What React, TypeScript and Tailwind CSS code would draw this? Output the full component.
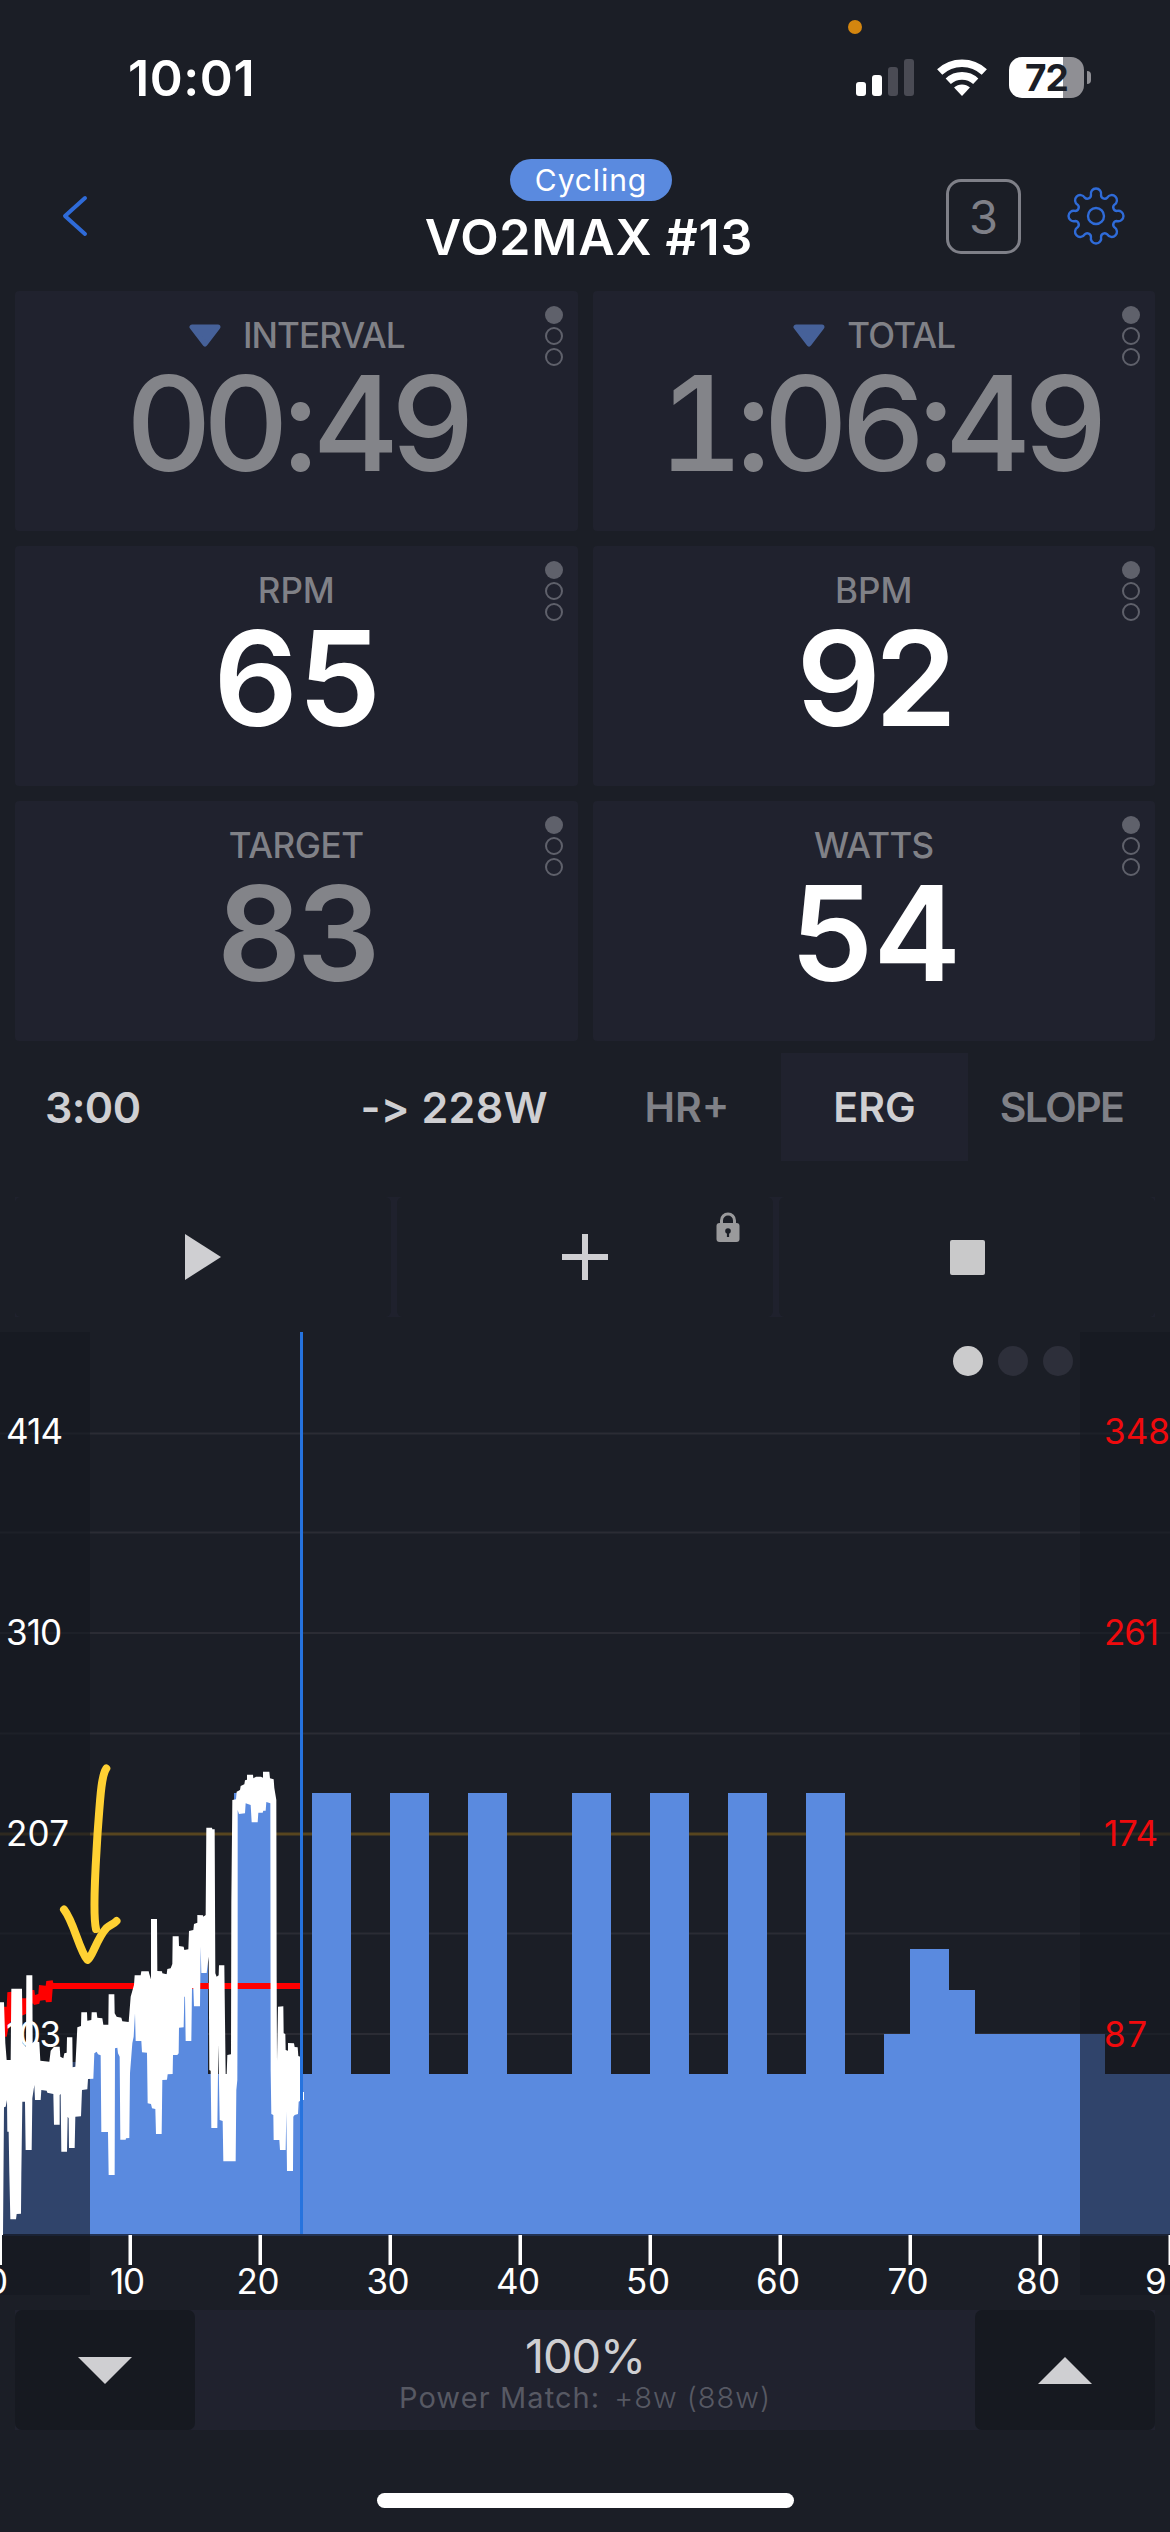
import type { ReactNode } from "react";
import clsx from "clsx";

interface MetricCardProps {
  label: string;
  value: string;
  labelClass?: string;
  valueClass: string;
  hasMarker?: boolean;
}

interface Segment {
  from: number;
  to: number;
  top: number;
}

const PX_PER_MIN = 13;
const CHART_BASE = 903;

// planned intervals, minutes -> top edge
const segments: Segment[] = [
  { from: 16, to: 18, top: 742 },
  { from: 18, to: 21, top: 461 },
  { from: 21, to: 24, top: 742 },
  { from: 24, to: 27, top: 461 },
  { from: 27, to: 30, top: 742 },
  { from: 30, to: 33, top: 461 },
  { from: 33, to: 36, top: 742 },
  { from: 36, to: 39, top: 461 },
  { from: 39, to: 44, top: 742 },
  { from: 44, to: 47, top: 461 },
  { from: 47, to: 50, top: 742 },
  { from: 50, to: 53, top: 461 },
  { from: 53, to: 56, top: 742 },
  { from: 56, to: 59, top: 461 },
  { from: 59, to: 62, top: 742 },
  { from: 62, to: 65, top: 461 },
  { from: 65, to: 68, top: 742 },
  { from: 68, to: 70, top: 702 },
  { from: 70, to: 73, top: 617 },
  { from: 73, to: 75, top: 658 },
  { from: 75, to: 85, top: 702 },
  { from: 85, to: 90, top: 742 },
];

const gridLines = [101.5, 200.5, 301, 401.5, 601.5, 702];

const powerLabels = [
  { text: "414", y: 112, width: 57 },
  { text: "310", y: 313, width: 56 },
  { text: "207", y: 514, width: 63 },
  { text: "103", y: 714.5, width: 55 },
];

const heartLabels = [
  { text: "348", y: 112, width: 66 },
  { text: "261", y: 313, width: 55 },
  { text: "174", y: 514, width: 54 },
  { text: "87", y: 714.5, width: 43 },
];

const minuteLabels = [
  { text: "0", x: -3, width: 22 },
  { text: "10", x: 127.5, width: 35 },
  { text: "20", x: 258, width: 43 },
  { text: "30", x: 388, width: 43 },
  { text: "40", x: 518, width: 44 },
  { text: "50", x: 648, width: 44 },
  { text: "60", x: 778, width: 44 },
  { text: "70", x: 908, width: 41 },
  { text: "80", x: 1038, width: 44 },
  { text: "90", x: 1169, width: 48 },
];

// recorded power, drawn as the filled envelope of the samples
const powerTrace =
  "0,637 12,637 16,760 20,810 32,810 34,596 66,596 68,760 78,770 79,556 97,556 98,760 106,752 118,757 121,812 148,815 152,782 162,770 179,770 181,800 190,805 193,790 200,788 201,742 217,742 218,832 226,830 232,712 243,708 244,667 261,667 262,692 274,690 275,667 290,667 292,683 307,685 310,704 325,704 326,613 343,613 344,670 350,680 364,683 367,694 386,696 392,620 402,585 404,556 422,556 424,544 446,544 448,552 453,568 453,387 471,387 472,543 486,544 487,550 500,553 502,537 512,535 517,522 518,439 536,439 537,468 551,470 553,480 565,478 567,423 580,420 582,402 592,398 592,375 609,376 610,380 617,375 619,113 636,113 637,118 644,118 646,550 650,560 656,556 657,526 673,526 675,690 677,852 680,852 682,795 693,793 694,335 697,30 708,28 710,5 720,0 722,-12 733,-17 735,-29 741,-31 741,-46 759,-46 760,-35 768,-40 783,-40 789,-37 789,-55 808,-55 810,-35 821,-32 823,-6 829,30 830,560 831,815 834,650 850,649 851,730 856,732 857,780 864,782 864,759 882,760 884,771 893,772 895,798 901,800 901,932 " +
  "896,935 894,972 884,975 880,980 879,1143 861,1143 859,965 857,1080 840,1080 838,1050 821,1050 820,975 814,972 812,840 811,40 799,36 797,62 790,62 788,68 775,68 773,97 755,97 752,45 737,40 735,70 717,72 713,60 713,600 712,870 709,900 707,1114 670,1114 668,993 659,990 655,765 652,1014 634,1014 632,842 628,840 626,500 620,549 604,549 602,470 600,649 582,649 580,595 576,595 574,753 557,753 555,620 553,620 551,712 537,713 536,790 532,795 519,795 518,852 503,853 501,869 487,870 485,1032 468,1032 466,957 456,955 453,942 443,940 441,788 426,787 424,753 407,753 405,670 401,740 397,760 390,850 388,1044 378,1045 377,1049 361,1049 359,800 354,790 352,773 345,775 344,1155 326,1155 324,1026 304,1026 302,796 294,793 290,785 283,790 280,866 264,867 262,898 246,900 243,979 226,980 224,1074 207,1074 206,985 203,980 201,1085 184,1085 182,912 179,915 179,1004 162,1004 160,912 142,908 140,902 124,900 122,930 105,930 103,885 97,925 95,1080 77,1080 75,935 67,935 64,1150 63,1271 50,1272 48,1288 31,1288 28,1150 26,1025 22,1025 21,930 17,950 12,952 9,1335 0,1335";

const heartTrace =
  "12,650 20,650 22,607 34,605 66,625 78,625 97,600 103,600 105,615 115,612 117,585 137,587 139,573 158,571 160,579 900,579 900,597 158,597 155,636 138,637 136,630 120,632 118,641 102,645 99,640 80,650 78,672 34,690 26,712 20,740 12,740";

function gearPath() {
  const at = (deg: number) => {
    const rad = ((deg - 90) * Math.PI) / 180;
    return `${(30 + 21.6 * Math.cos(rad)).toFixed(2)} ${(30 + 21.6 * Math.sin(rad)).toFixed(2)}`;
  };
  let d = `M${at(-13.5)}`;
  for (let i = 0; i < 8; i++) {
    d += `A5.2 5.2 0 1 1 ${at(i * 45 + 13.5)}A3.6 3.6 0 0 0 ${at(i * 45 + 31.5)}`;
  }
  return d + "Z";
}

function StatusBar() {
  return (
    <div className="relative flex h-[128px] items-start justify-between pl-[128px] pr-[79px] pt-[57px] text-white">
      <span className="-mt-[4px] text-[50px] font-semibold leading-none tracking-[0.6px]">
        10:01
      </span>
      <div className="absolute left-[848px] top-[20px] size-[14px] rounded-full bg-[#d4860f]" />
      <div className="flex">
        <div className="mt-[2px] flex h-[37px] items-end gap-[6px]">
          <div className="h-[14px] w-[10px] rounded-[3px] bg-white" />
          <div className="h-[21px] w-[10px] rounded-[3px] bg-white" />
          <div className="h-[29px] w-[10px] rounded-[3px] bg-[#4a4b54]" />
          <div className="h-[37px] w-[10px] rounded-[3px] bg-[#4a4b54]" />
        </div>
        <svg className="ml-[23px] mt-[2px] h-[37px] w-[50px]" viewBox="0 0 150 112">
          <g fill="none" stroke="#fff" strokeWidth="23">
            <path d="M7.5 39.6A99 99 0 0 1 142.5 39.6" />
            <path d="M33.4 67.4A61 61 0 0 1 116.6 67.4" />
          </g>
          <path d="M75 112L51 86.4A35 35 0 0 1 99 86.4Z" fill="#fff" />
        </svg>
        <div className="ml-[22px] flex h-[41px] w-[75px] items-center justify-center rounded-[13px] bg-[linear-gradient(90deg,#fff_54px,#8f8f94_54px)]">
          <span className="text-[37px] font-bold leading-none tracking-[-1px] text-[#1b1e26]">
            72
          </span>
        </div>
        <div className="ml-[3px] mt-[14px] h-[13px] w-[4px] rounded-r-full bg-[#8f8f94]" />
      </div>
    </div>
  );
}

function Header() {
  return (
    <div className="grid h-[163px] grid-cols-[371px_1fr_363px]">
      <svg className="ml-[60px] mt-[66px] h-[44px] w-[30px]" viewBox="0 0 30 44" fill="none">
        <path
          d="M25 4L5 22L25 40"
          stroke="#2f6bd8"
          strokeWidth="4"
          strokeLinecap="round"
          strokeLinejoin="round"
        />
      </svg>
      <div className="flex flex-col items-center pt-[31px] text-white">
        <div className="ml-[4px] flex h-[42px] w-[162px] items-center justify-center rounded-full bg-[#5a8adf]">
          <span className="text-[30px] leading-none tracking-[0.9px]">Cycling</span>
        </div>
        <h1 className="mt-[11px] whitespace-nowrap text-[50px] font-semibold leading-none tracking-[0.8px]">
          VO2MAX #13
        </h1>
      </div>
      <div className="flex items-start justify-end gap-[45px] pr-[44px]">
        <div className="mt-[51px] flex size-[75px] items-center justify-center rounded-[15px] border-[3px] border-[#7f8088] text-[47px] leading-none text-[#7f8088]">
          3
        </div>
        <svg
          className="mt-[58px] size-[60px]"
          viewBox="0 0 60 60"
          fill="none"
          stroke="#2f6bd8"
          strokeWidth="2.4"
        >
          <path d={gearPath()} />
          <circle cx="30" cy="30" r="8" />
        </svg>
      </div>
    </div>
  );
}

function MetricCard({ label, value, labelClass, valueClass, hasMarker }: MetricCardProps) {
  return (
    <div className="relative flex h-[240px] flex-col items-center rounded-[4px] bg-[#20222e] pt-[27px]">
      <div className="flex items-start gap-[21px] text-[35px] font-medium leading-none text-[#808187]">
        {hasMarker && (
          <svg className="mt-[6px] h-[23px] w-[34px]" viewBox="0 0 34 23">
            <path
              d="M4 3H30L17 20Z"
              fill="#466199"
              stroke="#466199"
              strokeWidth="5"
              strokeLinejoin="round"
            />
          </svg>
        )}
        <span className={labelClass}>{label}</span>
      </div>
      <span className={clsx("mt-[4px] text-[132px] leading-none", valueClass)}>{value}</span>
      <div className="absolute right-[15px] top-[15px] flex flex-col gap-[3px]">
        <i className="size-[18px] rounded-full bg-[#5f616b]" />
        <i className="size-[18px] rounded-full border-[2.5px] border-[#5f616b]" />
        <i className="size-[18px] rounded-full border-[2.5px] border-[#5f616b]" />
      </div>
    </div>
  );
}

function ModeRow() {
  return (
    <div className="mt-[12px] grid h-[108px] grid-cols-[593px_188px_187px_187px] items-center text-[41px] font-semibold leading-none">
      <div className="flex justify-between pl-[45px] pr-[45px] text-[43px] text-[#cfcfd2]">
        <span className="tracking-[-0.6px]">3:00</span>
        <span className="tracking-[0.4px]">-&gt; 228W</span>
      </div>
      <span className="text-center text-[#808187]">HR+</span>
      <span className="flex h-full items-center justify-center bg-[#20222e] text-[#cfcfd2]">
        ERG
      </span>
      <span className="text-center tracking-[-1.6px] text-[#808187]">SLOPE</span>
    </div>
  );
}

function ControlButton({ children }: { children: ReactNode }) {
  return (
    <button className="relative flex flex-1 items-center justify-center rounded-[6px] bg-[#1b1e26]">
      {children}
    </button>
  );
}

function Controls() {
  return (
    <div className="mx-[15px] mt-[36px] flex h-[120px] gap-[6px] bg-[#1f212d]">
      <ControlButton>
        <svg className="h-[46px] w-[36px]" viewBox="0 0 36 46">
          <path d="M0 0L36 23L0 46Z" fill="#cfcfd2" />
        </svg>
      </ControlButton>
      <ControlButton>
        <svg className="size-[46px]" viewBox="0 0 46 46">
          <path d="M23 0V46M0 23H46" stroke="#cfcfd2" strokeWidth="6" />
        </svg>
        <svg className="absolute left-[319px] top-[15px] h-[31px] w-[24px]" viewBox="0 0 24 31">
          <path d="M5.5 13V8.5a6.5 6.5 0 0 1 13 0V13" fill="none" stroke="#9a9a9c" strokeWidth="3" />
          <rect x="0.5" y="11" width="23" height="19" rx="3" fill="#9a9a9c" />
          <circle cx="12" cy="19" r="2.8" fill="#1b1e26" />
          <path d="M10.9 19h2.2v6h-2.2z" fill="#1b1e26" />
        </svg>
      </ControlButton>
      <ControlButton>
        <div className="size-[35px] rounded-[2px] bg-[#c9c9ca]" />
      </ControlButton>
    </div>
  );
}

function WorkoutChart() {
  return (
    <div className="relative mt-[15px] h-[963px]">
      <svg
        className="block h-[963px] w-full"
        viewBox="0 0 1170 963"
        fontFamily="Inter, sans-serif"
        fontSize="35"
      >
        {gridLines.map((y) => (
          <rect key={y} x="0" y={y - 1} width="1170" height="2" fill="#2b2c34" />
        ))}
        <rect x="0" y="500.5" width="1170" height="3" fill="#57451f" />

        <g fill="#5a8adf">
          {/* warm-up ramp */}
          <path
            d={`M0 730H80L128 694L135 672L151 652L185 630L198 606H208V${CHART_BASE}H0Z`}
          />
          {segments.map((s) => (
            <rect
              key={s.from}
              x={s.from * PX_PER_MIN}
              y={s.top}
              width={(s.to - s.from) * PX_PER_MIN}
              height={CHART_BASE - s.top}
              shapeRendering="crispEdges"
            />
          ))}
        </g>
        <rect x="0" y="902" width="1170" height="2" fill="#223252" />

        {/* parts outside of the selected range */}
        <rect x="0" y="0" width="90" height="963" fill="#161820" fillOpacity="0.61" />
        <rect x="1080" y="0" width="90" height="963" fill="#161820" fillOpacity="0.61" />

        <g transform="translate(0 458) scale(0.33333)">
          <polygon points={heartTrace} fill="#ff0000" />
          <polygon points={powerTrace} fill="#fff" />
        </g>
        <rect x="303" y="760" width="1" height="8" fill="#fff" />
        <rect x="300" y="0" width="3" height="902" fill="#2673de" />

        {minuteLabels.map((m, i) => (
          <g key={m.text} fill="#fff">
            <rect x={i * 130 - 1.5} y="903" width="3.5" height="30" />
            <text x={m.x} y="962" textAnchor="middle" textLength={m.width}>
              {m.text}
            </text>
          </g>
        ))}
        {powerLabels.map((l) => (
          <text key={l.text} x="6" y={l.y} fill="#fff" textLength={l.width}>
            {l.text}
          </text>
        ))}
        {heartLabels.map((l) => (
          <text key={l.text} x="1104" y={l.y} fill="#f00a0d" textLength={l.width}>
            {l.text}
          </text>
        ))}

        <g fill="none" stroke="#ffd133" strokeWidth="8" strokeLinecap="round" strokeLinejoin="round">
          <path d="M106.3 436.5C101 444 100 470 97.5 502C96 530 92 580 96 597" />
          <path d="M64 577.5C74 590 79 618 87.5 628C92 626 97 606 106.5 596C110 593 114 592 116.5 589" />
        </g>
      </svg>
      <div className="absolute left-[953px] top-[14px] flex gap-[15px]">
        <i className="size-[30px] rounded-full bg-[#cbcbcc]" />
        <i className="size-[30px] rounded-full bg-[#2d2f3a]" />
        <i className="size-[30px] rounded-full bg-[#2d2f3a]" />
      </div>
    </div>
  );
}

function IntensityBar() {
  return (
    <div className="mx-[15px] mt-[15px] flex h-[120px] bg-[#20222e]">
      <button className="flex w-[180px] items-center justify-center rounded-[7px] bg-[#161920]">
        <svg className="h-[27px] w-[54px]" viewBox="0 0 54 27">
          <path d="M0 0H54L27 27Z" fill="#cfcfd2" />
        </svg>
      </button>
      <div className="flex flex-1 flex-col items-center pt-[22px]">
        <span className="text-[47px] leading-none tracking-[-1.2px] text-[#cfcfd2]">100%</span>
        <div className="mt-[4px] flex gap-[14px] text-[29px] leading-none text-[#575963]">
          <span className="tracking-[1.1px]">Power Match:</span>
          <span className="font-light tracking-[1px]">+8w (88w)</span>
        </div>
      </div>
      <button className="flex w-[180px] items-center justify-center rounded-[7px] bg-[#161920]">
        <svg className="h-[27px] w-[54px]" viewBox="0 0 54 27">
          <path d="M0 27H54L27 0Z" fill="#cfcfd2" />
        </svg>
      </button>
    </div>
  );
}

export default function App() {
  return (
    <div className="flex h-[2532px] w-[1170px] flex-col overflow-hidden bg-[#1b1e26] font-['Inter',sans-serif]">
      <StatusBar />
      <Header />
      <div className="grid grid-cols-2 gap-[15px] px-[15px]">
        <MetricCard
          label="INTERVAL"
          value="00:49"
          hasMarker
          labelClass="tracking-[-0.9px]"
          valueClass="font-medium tracking-[-8px] text-[#838489]"
        />
        <MetricCard
          label="TOTAL"
          value="1:06:49"
          hasMarker
          labelClass="tracking-[-0.8px]"
          valueClass="ml-[11px] font-medium tabular-nums tracking-[-8px] text-[#838489]"
        />
        <MetricCard label="RPM" value="65" valueClass="ml-[2px] font-semibold text-white" />
        <MetricCard
          label="BPM"
          value="92"
          valueClass="font-semibold tracking-[-6px] text-white"
        />
        <MetricCard
          label="TARGET"
          value="83"
          labelClass="tracking-[-0.4px]"
          valueClass="font-semibold tracking-[-5px] text-[#838489]"
        />
        <MetricCard
          label="WATTS"
          value="54"
          labelClass="tracking-[-0.7px]"
          valueClass="ml-[4px] font-semibold text-white"
        />
      </div>
      <ModeRow />
      <Controls />
      <WorkoutChart />
      <IntensityBar />
      <div className="mx-auto mt-[63px] h-[15px] w-[417px] rounded-full bg-white" />
    </div>
  );
}
